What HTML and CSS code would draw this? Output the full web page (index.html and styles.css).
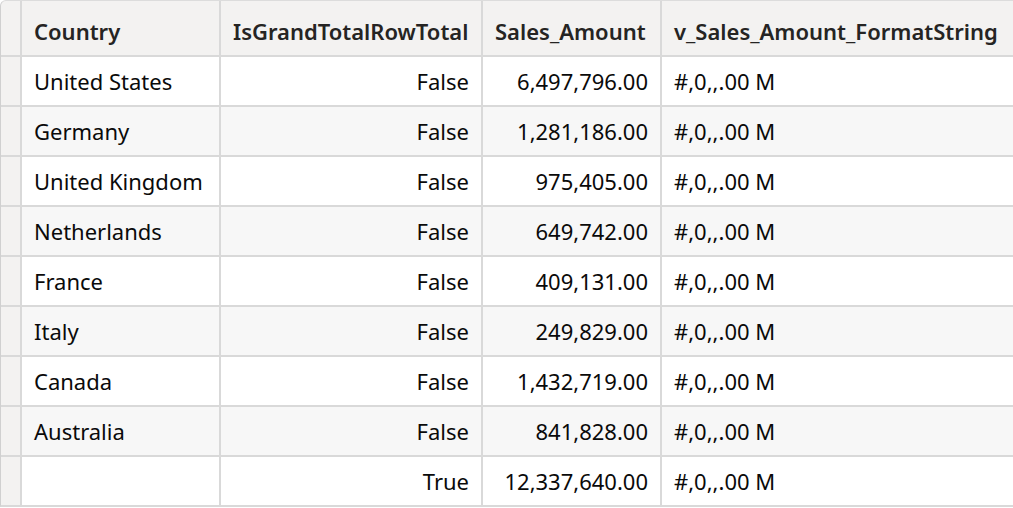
FILE: index.html
```html
<!DOCTYPE html>
<html>
<head>
<meta charset="utf-8">
<link rel="stylesheet" href="styles.css">
</head>
<body>
<div class="grid">
  <div class="cell gut hdr"></div>
  <div class="cell hdr">Country</div>
  <div class="cell hdr">IsGrandTotalRowTotal</div>
  <div class="cell hdr">Sales_Amount</div>
  <div class="cell hdr">v_Sales_Amount_FormatString</div>

  <div class="cell gut"></div>
  <div class="cell">United States</div>
  <div class="cell num">False</div>
  <div class="cell num">6,497,796.00</div>
  <div class="cell">#,0,,.00 M</div>

  <div class="cell gut"></div>
  <div class="cell alt">Germany</div>
  <div class="cell alt num">False</div>
  <div class="cell alt num">1,281,186.00</div>
  <div class="cell alt">#,0,,.00 M</div>

  <div class="cell gut"></div>
  <div class="cell">United Kingdom</div>
  <div class="cell num">False</div>
  <div class="cell num">975,405.00</div>
  <div class="cell">#,0,,.00 M</div>

  <div class="cell gut"></div>
  <div class="cell alt">Netherlands</div>
  <div class="cell alt num">False</div>
  <div class="cell alt num">649,742.00</div>
  <div class="cell alt">#,0,,.00 M</div>

  <div class="cell gut"></div>
  <div class="cell">France</div>
  <div class="cell num">False</div>
  <div class="cell num">409,131.00</div>
  <div class="cell">#,0,,.00 M</div>

  <div class="cell gut"></div>
  <div class="cell alt">Italy</div>
  <div class="cell alt num">False</div>
  <div class="cell alt num">249,829.00</div>
  <div class="cell alt">#,0,,.00 M</div>

  <div class="cell gut"></div>
  <div class="cell">Canada</div>
  <div class="cell num">False</div>
  <div class="cell num">1,432,719.00</div>
  <div class="cell">#,0,,.00 M</div>

  <div class="cell gut"></div>
  <div class="cell alt">Australia</div>
  <div class="cell alt num">False</div>
  <div class="cell alt num">841,828.00</div>
  <div class="cell alt">#,0,,.00 M</div>

  <div class="cell gut"></div>
  <div class="cell"></div>
  <div class="cell num">True</div>
  <div class="cell num">12,337,640.00</div>
  <div class="cell">#,0,,.00 M</div>
</div>
</body>
</html>
```
FILE: styles.css
```css
html, body {
  margin: 0;
  padding: 0;
  background: #ffffff;
  overflow: hidden;
}
body {
  width: 1013px;
  height: 508px;
  font-family: "Noto Sans", "Open Sans", sans-serif;
}
.grid {
  display: grid;
  grid-template-columns: 19px 197px 260px 177px 351px;
  grid-template-rows: 54px repeat(9, 48px);
  gap: 2px;
  background: #d9d9d9;
  border-top: 1px solid #dcdcdc;
  border-left: 1px solid #d0d0d0;
  border-bottom: 2px solid #d9d9d9;
  border-top-left-radius: 6px;
  overflow: hidden;
  width: 1012px;
}
.cell {
  background: #ffffff;
  color: #0a0a0a;
  font-size: 22px;
  display: flex;
  align-items: center;
  padding: 0 12px;
  white-space: nowrap;
  overflow: hidden;
}
.cell.alt {
  background: #f7f7f7;
}
.cell.gut {
  background: #f3f2f1;
  padding: 0;
}
.cell.hdr {
  background: #f3f2f1;
  color: #252423;
  font-weight: 600;
  padding-top: 6px;
}
.cell.gut.hdr {
  padding: 0;
}
.cell.num {
  justify-content: flex-end;
}
```
